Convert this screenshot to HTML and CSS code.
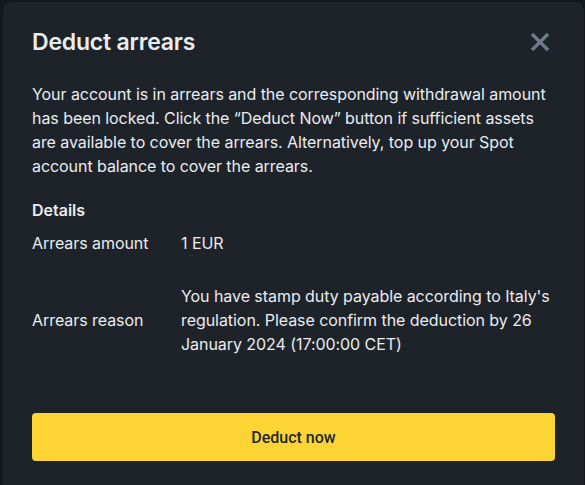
FILE: index.html
```html
<!DOCTYPE html>
<html lang="en">
<head>
<meta charset="utf-8">
<title>Deduct arrears</title>
<link rel="stylesheet" href="styles.css">
</head>
<body>
<div class="modal">
  <div class="modal-header">
    <h1 class="title">Deduct arrears</h1>
    <button class="close" aria-label="Close">
      <svg width="24" height="24" viewBox="0 0 24 24"><path d="M4 4 L20 20 M20 4 L4 20" stroke="#707a8a" stroke-width="3.2" stroke-linecap="butt" fill="none"/></svg>
    </button>
  </div>
  <p class="desc">Your account is in arrears and the corresponding withdrawal amount has been locked. Click the “Deduct Now” button if sufficient assets are available to cover the arrears. Alternatively, top up your Spot account balance to cover the arrears.</p>
  <div class="details-title">Details</div>
  <div class="row row-amount">
    <div class="label">Arrears amount</div>
    <div class="value">1 EUR</div>
  </div>
  <div class="row row-reason">
    <div class="label">Arrears reason</div>
    <div class="value">You have stamp duty payable according to Italy's regulation. Please confirm the deduction by 26 January 2024 (17:00:00 CET)</div>
  </div>
  <button class="primary">Deduct now</button>
</div>
</body>
</html>
```

FILE: styles.css
```css
html, body {
  margin: 0;
  padding: 0;
  height: 100%;
  overflow: hidden;
}
body {
  background: #14171b;
  font-family: "Inter", "Noto Sans", sans-serif;
  color: #eaecef;
}
.modal {
  margin: 2px 1px 0 3px;
  height: 483px;
  box-sizing: border-box;
  background: #1e2329;
  border-radius: 8px 8px 0 0;
  padding: 26px 29px 0 29px;
}
.modal-header {
  display: flex;
  justify-content: space-between;
  align-items: center;
  height: 28px;
}
.title {
  margin: 0;
  font-size: 23px;
  line-height: 28px;
  font-weight: 600;
  letter-spacing: -0.2px;
  color: #eaecef;
}
.close {
  background: none;
  border: 0;
  padding: 0;
  width: 24px;
  height: 24px;
  margin-right: 3px;
  display: flex;
}
.desc {
  margin: 26px 0 0 0;
  font-size: 16px;
  line-height: 24px;
  font-weight: 400;
  letter-spacing: -0.06px;
}
.details-title {
  margin-top: 20px;
  font-size: 16px;
  line-height: 24px;
  font-weight: 600;
}
.row {
  display: flex;
  align-items: center;
  font-size: 16px;
  line-height: 24px;
  letter-spacing: -0.06px;
}
.row-amount {
  margin-top: 9px;
}
.row-reason {
  margin-top: 29px;
}
.label {
  width: 149px;
  flex: none;
}
.value {
  flex: 1;
}
.primary {
  display: block;
  width: 100%;
  margin-top: 57px;
  height: 48px;
  border: 0;
  border-radius: 4px;
  background: #fcd535;
  color: #202630;
  font-family: "Roboto", sans-serif;
  font-size: 16px;
  font-weight: 500;
}
```
